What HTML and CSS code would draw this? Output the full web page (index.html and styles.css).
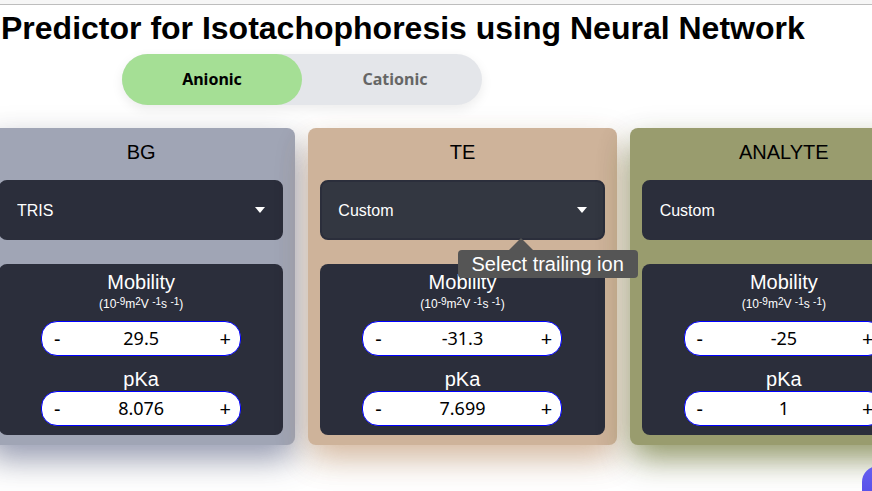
FILE: index.html
```html
<!DOCTYPE html>
<html lang="en">
<head>
<meta charset="utf-8">
<title>Predictor for Isotachophoresis</title>
<link rel="stylesheet" href="styles.css">
</head>
<body>
<div class="topbar"></div>
<main>
  <h1>Predictor for Isotachophoresis using Neural Network</h1>
  <div class="toggle">
    <button class="mode active" type="button">Anionic</button>
    <button class="mode" type="button">Cationic</button>
  </div>
  <div class="cards">
    <section class="card bg">
      <label class="title" for="bg-ion">BG</label>
      <div class="picker"><select id="bg-ion"><option>TRIS</option></select></div>
      <div class="panel">
        <label class="name" for="bg-mob">Mobility</label>
        <div class="unit">(10<sup>-9</sup>m<sup>2</sup>V <sup>-1</sup>s <sup>-1</sup>)</div>
        <div class="stepper"><button type="button">-</button><input id="bg-mob" type="text" value="29.5"><button type="button">+</button></div>
        <label class="name second" for="bg-pka">pKa</label>
        <div class="stepper"><button type="button">-</button><input id="bg-pka" type="text" value="8.076"><button type="button">+</button></div>
      </div>
    </section>
    <section class="card te">
      <label class="title" for="te-ion">TE</label>
      <div class="picker hovered"><select id="te-ion"><option>Custom</option></select><div class="tooltip">Select trailing ion</div></div>
      <div class="panel">
        <label class="name" for="te-mob">Mobility</label>
        <div class="unit">(10<sup>-9</sup>m<sup>2</sup>V <sup>-1</sup>s <sup>-1</sup>)</div>
        <div class="stepper"><button type="button">-</button><input id="te-mob" type="text" value="-31.3"><button type="button">+</button></div>
        <label class="name second" for="te-pka">pKa</label>
        <div class="stepper"><button type="button">-</button><input id="te-pka" type="text" value="7.699"><button type="button">+</button></div>
      </div>
    </section>
    <section class="card analyte">
      <label class="title" for="an-ion">ANALYTE</label>
      <div class="picker"><select id="an-ion"><option>Custom</option></select></div>
      <div class="panel">
        <label class="name" for="an-mob">Mobility</label>
        <div class="unit">(10<sup>-9</sup>m<sup>2</sup>V <sup>-1</sup>s <sup>-1</sup>)</div>
        <div class="stepper"><button type="button">-</button><input id="an-mob" type="text" value="-25"><button type="button">+</button></div>
        <label class="name second" for="an-pka">pKa</label>
        <div class="stepper"><button type="button">-</button><input id="an-pka" type="text" value="1"><button type="button">+</button></div>
      </div>
    </section>
  </div>
</main>
<button class="fab" type="button"></button>
</body>
</html>
```

FILE: styles.css
```css
* { box-sizing: border-box; }
body {
  margin: 0;
  min-height: 100vh;
  overflow: hidden;
  background: #fff;
  color: #000;
  font-family: "Liberation Sans", Arial, sans-serif;
}
button, input, select { font-family: inherit; }
.topbar {
  height: 5px;
  background: #f6f6f6;
  border-bottom: 1px solid #bdbdbd;
}
h1 {
  margin: 0;
  padding: 5px 0 8px 1px;
  font-size: 32px;
  line-height: 36px;
  white-space: nowrap;
}
.toggle {
  display: grid;
  grid-template-columns: 1fr 1fr;
  width: 360px;
  margin-left: 122px;
  border-radius: 26px;
  background: #e4e6ea;
  box-shadow: 0 4px 12px rgba(0, 0, 0, 0.08);
}
.mode {
  height: 51px;
  padding: 0 0 2px 6px;
  border: 0;
  border-radius: 26px;
  background: transparent;
  color: #666;
  font: bold 16px "Noto Sans", sans-serif;
}
.mode.active {
  padding-left: 0;
  background: #a5df95;
  color: #000;
}
.cards {
  display: grid;
  grid-template-columns: repeat(3, 1fr);
  gap: 13px;
  margin: 23px -66px 0 -13px;
}
.card {
  position: relative;
  padding: 12px 12px 10px;
  border-radius: 8px;
}
.bg {
  background: #a0a5b5;
  box-shadow: 0 16px 30px -4px rgba(90, 100, 145, 0.5), 0 12px 36px rgba(0, 0, 0, 0.18);
}
.te {
  background: #ceb39a;
  box-shadow: 0 16px 30px -4px rgba(190, 130, 80, 0.45), 0 12px 36px rgba(90, 60, 30, 0.15);
}
.analyte {
  background: #999c6e;
  box-shadow: 0 16px 30px -4px rgba(90, 100, 20, 0.55), 0 12px 36px rgba(50, 55, 0, 0.2);
}
.title {
  display: block;
  font-size: 20px;
  line-height: 24px;
  text-align: center;
}
.picker { position: relative; margin: 16px 0 24px; }
.picker::after {
  content: "";
  position: absolute;
  top: 27px;
  right: 18px;
  border: 5px solid transparent;
  border-top: 6px solid #fff;
  border-bottom: 0;
  pointer-events: none;
}
select {
  display: block;
  appearance: none;
  width: 100%;
  height: 60px;
  padding: 0 16px;
  border: 2px solid #2b2e3b;
  border-radius: 8px;
  background: #2b2e3b;
  color: #fff;
  font-size: 16px;
}
.hovered select { background: #333741; }
.tooltip {
  position: absolute;
  z-index: 2;
  top: 70px;
  right: -33px;
  width: 180px;
  border-radius: 4px;
  background: #555;
  color: #fff;
  font-size: 20px;
  line-height: 28px;
  text-align: center;
}
.tooltip::before {
  content: "";
  position: absolute;
  top: -12px;
  left: 51px;
  border: 12px solid transparent;
  border-top: 0;
  border-bottom-color: #555;
}
.panel {
  display: flex;
  flex-direction: column;
  align-items: center;
  padding: 6px 0 9px;
  border-radius: 8px;
  background: #2b2e3b;
  color: #fff;
}
.name { font-size: 20px; line-height: 24px; }
.second { margin-top: 11px; }
.unit {
  height: 27px;
  font-size: 12px;
  line-height: 20px;
}
.unit sup {
  font-size: 10px;
  line-height: 0;
  vertical-align: 3px;
}
.stepper {
  display: flex;
  width: 200px;
  height: 35px;
  border: 1px solid #00f;
  border-radius: 16px;
  background: #fff;
}
.stepper button, .stepper input {
  padding: 0 0 1px;
  border: 0;
  background: transparent;
  color: #000;
  font: 18px "Noto Sans", sans-serif;
  text-align: center;
}
.stepper button {
  width: 30px;
  font-size: 20px;
}
.stepper input { flex: 1; min-width: 0; }
.fab {
  position: fixed;
  right: -50px;
  bottom: -35px;
  width: 60px;
  height: 60px;
  border: 0;
  border-radius: 16px;
  background: linear-gradient(#655ff0, #493fe0);
}
```
